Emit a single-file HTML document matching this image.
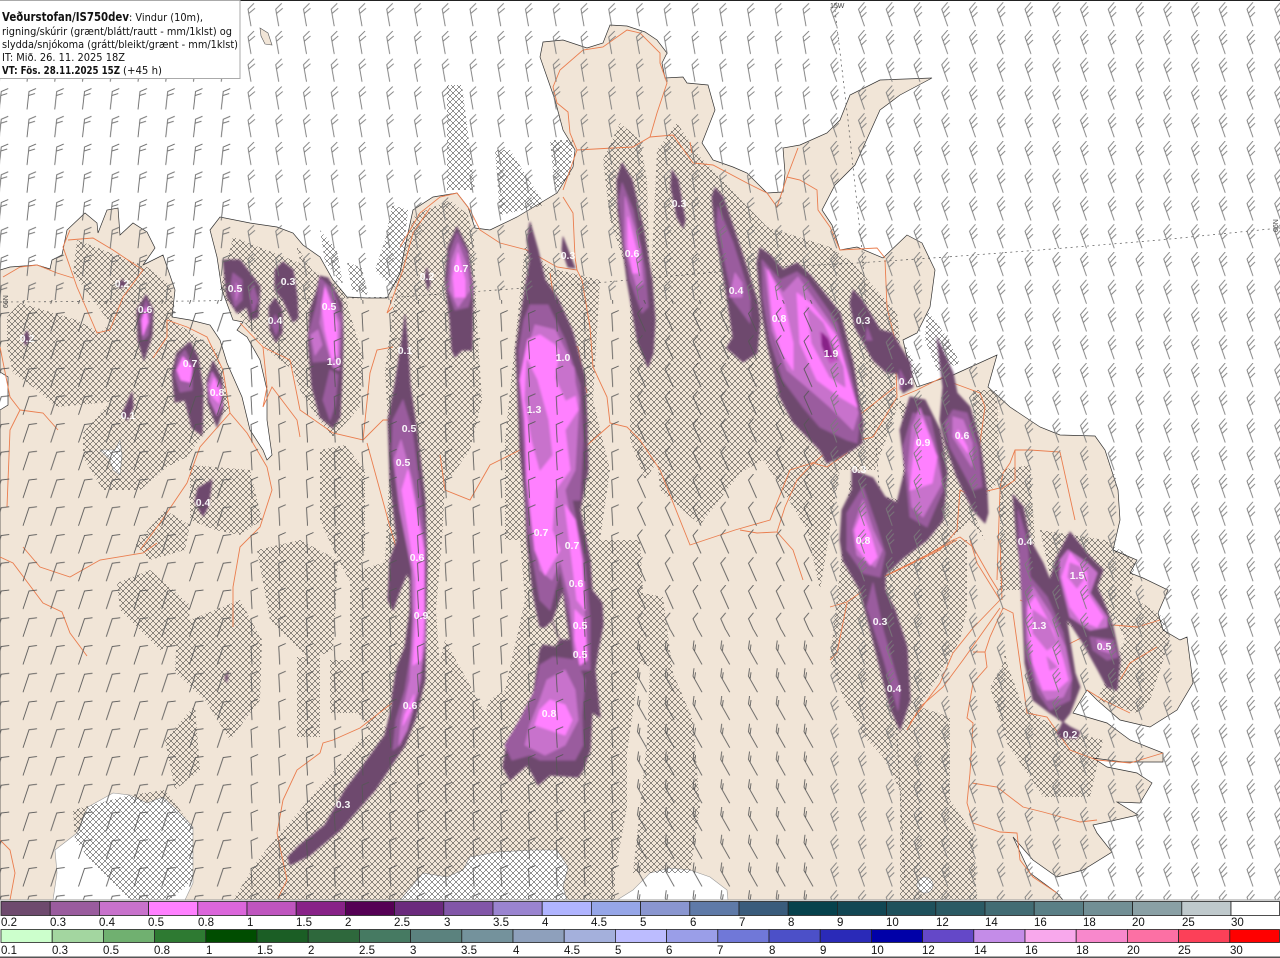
<!DOCTYPE html>
<html><head><meta charset="utf-8"><title>Veðurstofan</title>
<style>
html,body{margin:0;padding:0;background:#fff}
svg{display:block}
.a{fill:#6e4a6e;stroke:#6e4a6e}.b{fill:#9a5c9e;stroke:#9a5c9e}.c{fill:#c872cc;stroke:#c872cc}.d{fill:#ff80ff;stroke:#ff80ff}.e{fill:#db66db;stroke:#db66db}.f{fill:#bf55bf;stroke:#bf55bf}.g{fill:#882288;stroke:#882288}
.p polygon{stroke-width:1;stroke-linejoin:round}
.r polyline{fill:none;stroke:#ea7d4e;stroke-width:.9}
.l text{font:bold 10.5px "Liberation Sans",sans-serif;fill:#fff;text-anchor:middle;opacity:.95}
.k text{font:11.5px "Liberation Sans",sans-serif;fill:#111}
.k rect{stroke:#222;stroke-width:.8}
.t text{font-family:"DejaVu Sans",sans-serif;font-size:10.5px;fill:#111}
</style></head><body>
<svg width="1280" height="958" viewBox="0 0 1280 958" xmlns="http://www.w3.org/2000/svg">
<defs>
<filter id="s" filterUnits="userSpaceOnUse" x="0" y="0" width="1280" height="958"><feGaussianBlur stdDeviation="1"/></filter>
<pattern id="h" width="6" height="6" patternUnits="userSpaceOnUse"><path d="M0 0L6 6M6 0L0 6" stroke="#222" stroke-width=".5" fill="none"/></pattern>
<pattern id="p0" x="20" y="30" width="27.75" height="27.75" patternUnits="userSpaceOnUse"><path d="M7 24L9 6L16 3M8.7 10L15 8" stroke="#666" stroke-width=".9" fill="none"/></pattern>
<pattern id="p1" x="17" y="30" width="27.75" height="27.75" patternUnits="userSpaceOnUse"><path d="M12 24L9 7L15 1M10 11L16 6" stroke="#777" stroke-width=".9" fill="none"/></pattern>
<pattern id="p7" x="18" y="30" width="27.75" height="27.75" patternUnits="userSpaceOnUse"><path d="M14 24L8 7L14 0M9.5 11L15.5 4M10.8 15L16 10" stroke="#7a7a7a" stroke-width=".9" fill="none"/></pattern>
<pattern id="p4" x="20" y="30" width="27.75" height="27.75" patternUnits="userSpaceOnUse"><path d="M3 24L9 6L17 5" stroke="#555" stroke-width=".85" fill="none"/></pattern>
<pattern id="p5" x="20" y="30" width="27.75" height="27.75" patternUnits="userSpaceOnUse"><path d="M10 24L9 6L16 3" stroke="#555" stroke-width=".85" fill="none"/></pattern>
<pattern id="p6" x="20" y="30" width="27.75" height="27.75" patternUnits="userSpaceOnUse"><path d="M15 24L7 6L12 0" stroke="#555" stroke-width=".85" fill="none"/></pattern>
<pattern id="p8" x="20" y="30" width="27.75" height="27.75" patternUnits="userSpaceOnUse"><path d="M16 24L7 8L8 0M8.5 11L9.5 4" stroke="#555" stroke-width=".85" fill="none"/></pattern>
</defs>
<rect width="1280" height="958" fill="#fff"/>
<!-- land -->
<path fill="#f1e5d7" stroke="#333" stroke-width=".7" d="M0 270L10 267L37 265L50 269L52 260L62 255L67 230L85 213L97 223L98 233L107 210L118 208L120 235L133 223L147 232L155 248L143 265L163 255L175 290L172 317L190 320L210 325L220 340L227 363L242 397L250 430L263 450L267 460L272 455L267 420L267 390L260 360L247 337L237 330L243 322L233 320L222 290L217 257L210 230L220 217L250 223L277 227L293 233L303 245L320 257L333 280L347 297L367 298L387 298L400 273L405 247L413 210L433 197L457 193L468 207L475 228L490 230L517 217L557 193L573 167L575 150L563 130L555 100L540 57L543 42L563 40L587 48L603 43L610 25L627 26L645 32L657 40L667 53L662 63L665 78L683 77L687 83L708 85L715 110L702 143L713 160L733 167L747 173L767 193L783 192L785 173L783 148L800 145L827 133L840 120L850 95L880 80L932 78L900 95L880 110L862 150L855 165L835 185L822 210L832 225L840 250L857 247L883 258L907 235L922 243L935 270L930 307L917 333L903 340L910 370L917 387L953 375L997 355L988 387L1010 407L1040 427L1060 435L1095 436L1105 450L1118 490L1120 520L1113 550L1137 560L1130 573L1143 578L1168 590L1158 613L1163 630L1180 640L1187 637L1193 683L1177 710L1150 727L1120 720L1097 700L1087 690L1073 713L1107 723L1130 740L1163 753L1163 762L1123 762L1093 758L1107 767L1137 773L1152 783L1140 803L1117 802L1138 815L1107 822L1093 825L1097 833L1112 852L1083 870L1057 877L1033 860L1013 837L1030 873L1057 893L1063 900L0 900L0 410L8 405L8 377L0 372Z"/>
<path fill="#f1e5d7" stroke="#555" stroke-width=".6" d="M260 28L268 33L272 45L265 44L261 36Z"/>
<!-- glaciers -->
<g fill="#fff" stroke="#999" stroke-width=".6">
<path d="M113 793L130 795L147 803L163 797L177 810L193 827L193 860L193 883L185 900L53 900L57 873L55 850L77 833L88 807Z"/>
<path d="M400 900L423 873L447 877L463 870L470 857L497 852L533 850L557 850L568 867L563 887L567 900Z"/>
<path d="M617 900L633 890L650 873L670 868L690 870L710 877L727 890L728 900Z"/>
<path d="M100 450L115 450L120 440L122 455L120 475L113 470L110 460Z"/>
<circle cx="925" cy="885" r="8"/>
</g>
<!-- hatching -->
<path fill="url(#h)" d="M77 240L147 267L170 285L175 310L172 320L217 350L223 377L230 407L207 430L187 457L167 467L140 490L103 490L83 457L83 433L110 402L57 407L33 387L13 373L7 347L7 317L20 303L77 320L100 333L110 323L73 273Z
M190 465L250 470L262 520L240 535L215 530L190 520Z M135 545L165 510L190 525L185 550L150 560Z
M233 237L300 263L343 290L363 357L360 407L333 437L317 417L300 390L293 370L267 350L240 317L220 290Z
M320 230L337 250L343 285L325 262Z M347 262L362 268L368 295L352 290Z M392 205L408 210L403 260L395 290L375 270L385 240Z
M447 85L462 85L475 190L447 190Z M495 150L510 150L545 205L500 215Z M550 140L573 140L570 175L555 192Z M296 245L325 290L300 260Z
M400 255L415 215L450 200L468 215L474 240L475 280L478 340L482 400L470 450L445 485L442 540L436 610L440 670L445 720L420 740L400 700L388 650L385 560L390 460L385 370L393 310Z
M320 450L345 445L365 470L365 550L355 590L338 560L320 520Z
M117 583L150 570L190 605L188 640L160 650L120 610Z M177 625L240 600L262 640L260 700L230 740L205 700L175 672Z
M257 550L300 540L338 560L333 650L310 660L290 640L270 620Z M297 657L320 657L320 737L297 737Z M330 660L360 660L360 713L330 713Z M350 573L392 560L395 700L375 740L350 700Z
M73 810L130 795L165 790L193 827L193 880L170 900L130 900L90 860L75 840Z
M165 740L195 705L200 770L175 790Z
M233 900L260 857L360 740L390 723L430 700L445 640L500 740L470 750L490 700L505 690L525 600L520 540L505 540L505 440L525 245L550 268L600 280L593 400L610 470L600 540L640 540L643 593L663 597L673 673L693 720L700 807L690 873L633 873L647 740L650 667L640 663L627 753L627 807L615 873L615 900Z
M603 160L620 123L640 140L647 180L650 280L630 280L610 220Z
M630 290L660 340L665 450L645 480L630 440Z
M657 150L677 123L700 157L767 227L830 247L853 263L897 313L900 340L895 385L903 425L903 500L883 497L860 490L850 480L830 660L843 697L867 740L883 757L900 790L900 900L977 900L973 833L950 800L950 717L920 707L960 640L967 610L967 540L950 540L970 520L985 540L960 480L940 430L900 400L875 470L840 470L820 590L807 530L783 490L763 460L740 473L700 525L660 490L652 400L650 300Z
M905 345L920 375L908 373Z M927 310L947 337L960 363L938 372L925 340Z M973 390L997 390L1000 480L985 497L973 450Z
M990 687L1007 657L1003 653L1023 707L1060 730L1103 740L1090 797L1043 797L1007 743Z M1097 573L1163 617L1170 640L1150 700L1137 713L1097 700L1125 640Z
M1000 470L1030 465L1035 540L1025 590L1000 590Z M1040 530L1105 540L1135 560L1130 600L1095 640L1060 620Z"/>
<!-- graticule -->
<g fill="none" stroke="#555" stroke-width=".7" stroke-dasharray="2 3.5">
<polyline points="0,302 200,301 400,297 607,282 760,268 857,263 947,257 1040,250 1160,240 1280,228"/>
<polyline points="835,10 848,120 862,250 880,500 895,700 905,880"/>
</g>
<!-- roads -->
<g class="r">
<polyline points="3,277 20,267 37,265 57,273 73,278"/>
<polyline points="70,230 63,247 77,287 97,333 110,330 123,297 143,270 113,250 93,238 68,240"/>
<polyline points="0,347 10,397 20,410 10,430 7,507"/>
<polyline points="20,410 43,413 58,430"/>
<polyline points="153,358 167,337 167,320 187,327 207,337 223,370 230,413 200,447 187,483 160,523 140,550"/>
<polyline points="230,413 247,433 267,467 272,490 260,527 240,547 233,587 233,627"/>
<polyline points="240,323 263,347 290,360 300,410 333,433 363,440 370,373 377,350 393,347"/>
<polyline points="263,347 267,387 263,407 272,387 297,420 300,437"/>
<polyline points="363,440 383,420 393,420"/>
<polyline points="393,307 387,313 403,270 413,233 430,208"/>
<polyline points="367,443 390,527 397,550"/>
<polyline points="0,557 13,563 43,603 62,612 70,633 87,656"/>
<polyline points="23,547 40,567 70,577 100,560 143,553 157,543"/>
<polyline points="392,703 360,728 333,740 323,743 320,753 297,770 283,800 277,833 287,880 278,898"/>
<polyline points="0,840 10,850 15,873 10,900"/>
<polyline points="400,247 420,213 440,197 457,193 470,210 480,230 500,243 527,250 557,267 577,270 582,280 590,327 593,367 607,397 610,423 627,427 640,440 660,470 690,545 735,530 770,520 790,470 815,462 840,440 855,430"/>
<polyline points="550,273 555,307 552,330 560,343 578,347 582,373 587,393"/>
<polyline points="563,197 573,213 575,257 577,270"/>
<polyline points="577,150 613,148 633,147 650,137 673,135 693,163 713,165 747,183 767,193 777,207 787,177 798,148"/>
<polyline points="577,150 570,133 568,112 557,103 553,87 560,70 583,50 603,47 627,30 640,33 660,53 660,63 667,83 657,113 650,137"/>
<polyline points="577,150 563,190"/>
<polyline points="690,142 692,153"/>
<polyline points="440,455 445,490 470,500 490,465 520,450 585,447 610,425"/>
<polyline points="740,530 757,533 777,532 785,507 797,480 813,463 827,467 847,453 847,440 860,440 873,437 897,397 895,340 887,307 885,260"/>
<polyline points="830,430 853,420 895,387"/>
<polyline points="777,532 793,550 803,580"/>
<polyline points="865,588 883,577 913,563 953,540 960,537 973,547 990,577 998,590"/>
<polyline points="883,577 940,550 957,530 960,490 970,495 1000,488 1003,473 1010,463 1015,450 1030,450 1060,452 1075,520"/>
<polyline points="1015,450 1015,480 1000,490 997,580"/>
<polyline points="953,383 980,393 985,407 980,443 970,487"/>
<polyline points="947,375 917,390 900,397"/>
<polyline points="787,177 800,180 817,190 818,210 830,227 840,250 877,248 885,258"/>
<polyline points="830,607 847,602 883,577 957,540"/>
<polyline points="830,660 837,653 847,603"/>
<polyline points="907,730 920,707 943,687 963,660 1000,608"/>
<polyline points="910,723 940,683 953,653 973,628 1000,600 977,563 970,540"/>
<polyline points="1000,540 1002,600"/>
<polyline points="1003,608 990,637 985,652 973,652"/>
<polyline points="985,652 987,667 973,683 967,718 973,723 970,773 967,803 973,823 1000,832 1017,833 1020,860 1033,877 1057,893"/>
<polyline points="972,783 997,787 1023,807 1043,812 1080,822 1097,820"/>
<polyline points="1003,608 1013,613 1027,713 1047,717 1063,740 1070,750 1097,760 1130,763 1163,753"/>
<polyline points="1020,600 1050,613 1077,610 1083,600"/>
<polyline points="1033,653 1063,647 1087,635 1113,625 1137,627 1160,620"/>
<polyline points="1120,680 1130,663 1157,647"/>
<polyline points="1087,690 1103,700 1130,713"/>
</g>
<!-- precipitation -->
<g class="p" filter="url(#s)">
<polygon class="a" points="146,295 153,310 152,335 144,360 138,340 137,310"/>
<polygon class="b" points="146,300 151,315 148,335 143,340 140,320"/>
<polygon class="d" points="146,308 148,322 143,335 142,320"/>
<polygon class="a" points="190,342 198,357 203,390 202,435 192,428 185,400 175,402 172,373 177,353"/>
<polygon class="b" points="185,350 192,365 192,390 180,392 175,375 178,358"/>
<polygon class="d" points="183,357 192,368 190,382 181,380 177,370"/>
<polygon class="a" points="213,361 222,380 223,410 217,427 208,403 207,380"/>
<polygon class="c" points="212,372 220,385 222,405 217,415 210,400 208,385"/>
<polygon class="d" points="214,378 220,392 219,403 214,398 210,390"/>
<polygon class="a" points="223,260 240,260 250,273 260,287 258,317 250,320 247,307 237,313 227,297"/>
<polygon class="b" points="233,273 242,280 242,300 235,307 230,290"/>
<polygon class="c" points="236,283 239,290 236,300"/>
<polygon class="b" points="253,285 258,300 253,312 250,295"/>
<polygon class="a" points="283,262 293,270 297,297 298,318 293,322 283,300 275,290 275,270"/>
<polygon class="a" points="275,298 282,310 282,333 276,342 270,330 269,307"/>
<polygon class="b" points="275,315 280,325 276,335 272,325"/>
<polygon class="a" points="320,276 328,278 342,303 343,337 342,377 340,417 333,428 320,417 312,387 308,340 310,310 317,290"/>
<polygon class="b" points="320,278 333,290 342,317 340,360 313,362 309,333 317,303"/>
<polygon class="c" points="325,285 340,323 339,370 333,367 320,323"/>
<polygon class="d" points="325,288 337,323 337,355 332,360 325,330 322,305"/>
<polygon class="c" points="318,330 322,345 315,355 311,335"/>
<polygon class="b" points="330,370 338,375 335,405 330,420 323,400"/>
<polygon class="a" points="405,315 408,350 410,385 418,440 425,500 427,560 426,620 425,680 415,720 405,745 395,760 375,790 340,830 310,855 290,865 288,857 300,845 325,825 345,790 360,770 385,735 392,705 392,697 397,667 405,647 410,610 410,580 407,573 400,590 393,610 388,600 390,560 397,540 390,480 388,420 395,385 402,340"/>
<polygon class="b" points="403,400 412,430 420,490 425,540 424,610 421,680 410,720 400,745 393,750 396,720 405,690 413,640 414,600 412,560 400,510 392,450 393,420"/>
<polygon class="c" points="401,440 412,480 423,540 425,640 418,690 407,730 399,745 401,720 410,680 413,620 412,570 400,510 394,460"/>
<polygon class="d" points="408,470 418,520 424,550 424,620 421,660 413,665 416,620 416,580 410,540 402,490"/>
<polygon class="d" points="405,715 414,695 411,710 403,725"/>
<polygon class="a" points="212,480 208,507 203,516 195,502 198,488"/>
<polygon class="a" points="132,392 133,407 128,420 122,415 125,408"/>
<polygon class="a" points="122,280 127,284 121,288 118,284"/>
<polygon class="a" points="27,331 30,340 25,345 24,336"/>
<polygon class="a" points="563,237 575,268 568,267 562,250"/>
<polygon class="a" points="427,268 430,283 428,290 425,277"/>
<polygon class="a" points="228,672 227,682 225,678"/>
<polygon class="a" points="457,227 468,250 473,287 472,350 462,350 455,357 452,350 450,320 445,280 448,247"/>
<polygon class="b" points="457,233 467,253 473,290 468,307 455,310 447,287 450,253"/>
<polygon class="c" points="458,243 467,267 470,290 458,307 450,290 452,260"/>
<polygon class="d" points="458,253 465,280 465,297 455,297 453,277"/>
<path class="a" fill-rule="evenodd" stroke-width="1" d="M530 222L538 250L545 280L557 297L572 330L585 377L587 420L588 470L580 510L590 560L592 590L602 603L603 625L598 650L595 670L600 717L592 712L590 750L583 770L578 777L550 775L538 785L532 773L527 765L510 780L503 767L507 743L533 697L540 650L543 645L556 647L560 640L552 620L545 627L540 627L533 593L527 540L525 500L520 450L518 400L516 350L520 320L525 290L530 260L527 240Z M563 590L570 640L560 640L555 628L552 620Z"/>
<polygon class="b" points="530,305 548,305 565,340 580,385 583,440 580,500 572,500 585,565 590,620 590,670 575,670 570,620 560,570 550,610 540,600 528,530 525,470 520,400 519,350 524,320"/>
<polygon class="c" points="535,325 555,330 570,360 579,400 575,470 565,490 578,560 585,620 585,655 575,655 570,600 560,560 552,580 540,570 530,500 525,430 522,370"/>
<polygon class="d" points="528,340 540,335 555,345 570,370 578,410 565,430 570,470 555,490 552,530 560,550 545,575 535,550 527,480 525,420 520,380"/>
<polygon class="d" points="565,505 575,520 582,560 585,610 577,600 572,560"/>
<polygon class="d" points="575,610 585,620 587,660 580,665 575,640"/>
<polygon class="c" points="527,360 537,380 548,420 552,455 540,470 532,440 525,400"/>
<polygon class="c" points="560,350 574,368 576,395 566,400 556,378"/>
<polygon class="b" points="553,657 575,660 585,680 582,715 583,745 575,760 540,760 530,755 512,760 505,745 520,720 535,690 540,665"/>
<polygon class="c" points="565,670 575,690 578,720 565,745 545,755 525,745 530,725 540,700 547,680"/>
<polygon class="d" points="550,700 565,705 572,720 565,735 550,730 535,725 540,710"/>
<polygon class="a" points="622,163 632,180 643,227 652,280 655,320 653,353 648,367 638,343 627,280 618,210 617,180"/>
<polygon class="b" points="622,183 633,210 645,270 648,307 642,313 630,280 623,237 619,200"/>
<polygon class="c" points="625,197 640,247 643,283 637,287 625,247"/>
<polygon class="d" points="628,217 637,253 639,273 633,273 628,247"/>
<polygon class="a" points="672,170 678,180 685,220 683,228 677,217 671,187"/>
<polygon class="a" points="715,188 723,197 740,247 757,300 760,320 757,353 743,362 727,348 733,337 728,303 715,227 712,197"/>
<polygon class="b" points="718,207 733,243 750,297 750,323 733,300 723,253 717,225"/>
<polygon class="c" points="735,273 742,283 742,297 730,297"/>
<polygon class="a" points="760,248 770,255 783,270 797,263 810,275 840,313 853,363 863,423 862,443 855,448 840,457 827,463 820,450 793,422 780,397 768,347 762,313 757,263"/>
<polygon class="b" points="762,260 780,280 797,272 807,280 837,323 850,370 860,417 857,443 847,440 820,427 803,407 783,380 770,340 763,297"/>
<polygon class="c" points="765,267 783,293 798,277 835,330 847,370 858,413 853,430 830,407 807,387 787,370 772,330"/>
<polygon class="d" points="768,270 783,300 793,343 793,370 782,353 773,323"/>
<polygon class="d" points="797,293 810,303 837,337 847,373 857,407 840,397 817,380 800,343"/>
<polygon class="c" points="807,307 823,323 843,367 845,387 830,377 812,343"/>
<polygon class="f" points="820,332 828,337 838,360 830,363 822,347"/>
<polygon class="g" points="822,333 828,340 833,358 826,355 822,345"/>
<polygon class="a" points="853,290 862,300 880,330 892,333 910,363 913,387 903,393 897,373 887,373 873,360 855,327 850,303"/>
<polygon class="b" points="867,327 872,340 866,340"/>
<polygon class="b" points="900,370 905,380 900,390"/>
<polygon class="a" points="852,470 873,478 885,497 897,503 905,470 900,430 910,397 925,400 940,430 947,473 943,520 927,540 903,558 885,575 885,590 895,610 907,647 910,700 900,730 890,707 873,640 860,590 843,560 840,540 842,510 852,490"/>
<polygon class="b" points="913,413 930,417 940,463 943,490 927,527 910,517 908,497 903,447"/>
<polygon class="c" points="920,408 933,443 942,483 923,517 912,507 908,470 912,427"/>
<polygon class="d" points="922,418 937,457 932,483 920,487 910,490 915,443"/>
<polygon class="b" points="863,487 877,527 885,553 880,577 863,573 847,550 847,513"/>
<polygon class="c" points="863,500 873,530 882,550 875,567 857,555 853,530"/>
<polygon class="d" points="862,513 870,533 877,557 870,565 857,547 855,530"/>
<polygon class="b" points="873,583 883,630 900,690 898,710 883,657 867,607"/>
<polygon class="a" points="937,338 953,373 957,393 970,407 980,443 987,493 988,513 985,523 973,510 957,477 945,443 940,420 943,387"/>
<polygon class="b" points="953,410 967,413 978,447 982,487 973,490 950,447 945,423"/>
<polygon class="c" points="953,417 963,420 972,443 972,467 953,437"/>
<polygon class="d" points="958,430 967,447 968,453 957,438"/>
<polygon class="a" points="1013,495 1023,507 1030,540 1043,563 1050,580 1067,623 1075,673 1080,687 1070,713 1063,722 1050,713 1033,700 1025,663 1022,600 1020,560 1017,540"/>
<polygon class="b" points="1018,510 1027,540 1030,577 1047,597 1063,633 1072,677 1070,700 1050,710 1038,693 1027,657 1023,607 1020,560"/>
<polygon class="c" points="1033,587 1050,613 1065,647 1071,680 1063,697 1047,700 1037,683 1027,640 1027,603"/>
<polygon class="d" points="1035,597 1053,630 1063,660 1068,680 1057,690 1043,690 1033,663 1028,627 1028,607"/>
<polygon class="c" points="1033,610 1047,620 1057,643 1047,650 1033,633"/>
<polygon class="c" points="1047,657 1057,667 1050,670"/>
<polygon class="a" points="1070,532 1090,557 1103,570 1097,587 1107,610 1113,627 1120,660 1117,690 1107,687 1098,670 1083,643 1070,623 1060,615 1050,580 1057,557"/>
<polygon class="c" points="1068,550 1087,563 1097,573 1090,593 1107,617 1107,627 1090,630 1070,617 1060,577 1060,560"/>
<polygon class="d" points="1070,553 1087,573 1087,593 1103,617 1097,627 1080,620 1070,607 1062,577"/>
<polygon class="c" points="1070,563 1080,567 1083,580 1077,588 1068,577"/>
<polygon class="b" points="1090,637 1113,640 1118,657 1107,660 1093,650"/>
<polygon class="c" points="1097,640 1110,643 1110,653 1100,650"/>
<polygon class="a" points="1060,728 1063,722 1070,727 1080,732 1077,738 1060,738 1057,733"/>
</g>
<!-- wind barbs -->
<g>
<rect x="0" y="0" width="240" height="300" fill="url(#p0)"/>
<rect x="240" y="0" width="590" height="300" fill="url(#p1)"/>
<rect x="830" y="0" width="450" height="900" fill="url(#p7)"/>
<rect x="0" y="300" width="240" height="600" fill="url(#p4)"/>
<rect x="240" y="300" width="380" height="600" fill="url(#p5)"/>
<rect x="620" y="300" width="210" height="330" fill="url(#p6)"/>
<rect x="620" y="630" width="210" height="270" fill="url(#p8)"/>
</g>
<!-- value labels -->
<g class="l">
<text x="145" y="313">0.6</text><text x="190" y="367">0.7</text><text x="217" y="396">0.8</text><text x="235" y="292">0.5</text><text x="288" y="285">0.3</text><text x="275" y="324">0.4</text><text x="329" y="310">0.5</text><text x="334" y="365">1.0</text><text x="461" y="272">0.7</text><text x="405" y="354">0.1</text><text x="409" y="432">0.5</text><text x="403" y="466">0.5</text><text x="417" y="561">0.6</text><text x="421" y="619">0.9</text><text x="410" y="709">0.6</text><text x="343" y="808">0.3</text><text x="203" y="506">0.4</text><text x="128" y="419">0.1</text><text x="563" y="361">1.0</text><text x="534" y="413">1.3</text><text x="541" y="536">0.7</text><text x="572" y="549">0.7</text><text x="576" y="587">0.6</text><text x="580" y="629">0.5</text><text x="580" y="658">0.5</text><text x="549" y="717">0.8</text><text x="632" y="257">0.6</text><text x="679" y="207">0.3</text><text x="736" y="294">0.4</text><text x="779" y="322">0.8</text><text x="831" y="357">1.9</text><text x="863" y="324">0.3</text><text x="906" y="385">0.4</text><text x="923" y="446">0.9</text><text x="962" y="439">0.6</text><text x="859" y="473">0.3</text><text x="863" y="544">0.8</text><text x="880" y="625">0.3</text><text x="894" y="692">0.4</text><text x="1025" y="545">0.4</text><text x="1039" y="629">1.3</text><text x="1077" y="579">1.5</text><text x="1104" y="650">0.5</text><text x="1070" y="738">0.2</text><text x="568" y="259">0.3</text><text x="427" y="280">0.2</text><text x="122" y="287">0.2</text><text x="27" y="342">0.2</text>
</g>
<!-- graticule labels -->
<g font-family="'Liberation Sans',sans-serif" font-size="7" fill="#444">
<text x="830" y="8">15W</text>
<text transform="translate(8,308) rotate(-90)">66N</text>
<text transform="translate(1278,232) rotate(-90)">66N</text>
</g>
<!-- map bottom line / top -->
<rect x="0" y="899.5" width="1280" height="1" fill="#999"/>
<rect x="0" y="900.5" width="1280" height="57.5" fill="#fff"/>
<rect x="0" y="0" width="1280" height="1" fill="#222"/>
<!-- title box -->
<rect x="-1" y="0.5" width="241" height="78" fill="#fff" stroke="#aaa"/>
<g class="t">
<text x="2" y="21" style="font-weight:bold;font-size:12px" textLength="127" lengthAdjust="spacingAndGlyphs">Veðurstofan/IS750dev</text>
<text x="129" y="21" textLength="74" lengthAdjust="spacingAndGlyphs">: Vindur (10m),</text>
<text x="2" y="35" textLength="230" lengthAdjust="spacingAndGlyphs">rigning/skúrir (grænt/blátt/rautt - mm/1klst) og</text>
<text x="2" y="48" textLength="236" lengthAdjust="spacingAndGlyphs">slydda/snjókoma (grátt/bleikt/grænt - mm/1klst)</text>
<text x="2" y="61" textLength="123" lengthAdjust="spacingAndGlyphs">IT: Mið. 26. 11. 2025 18Z</text>
<text x="2" y="74" style="font-weight:bold" textLength="118" lengthAdjust="spacingAndGlyphs">VT: Fös. 28.11.2025 15Z</text>
<text x="123" y="74" textLength="39" lengthAdjust="spacingAndGlyphs">(+45 h)</text>
</g>
<!-- colour bars -->
<g class="k">
<rect x="1" y="901.5" width="49.2" height="14" fill="#6e4a6e"/><rect x="50.2" y="901.5" width="49.2" height="14" fill="#9a5c9e"/><rect x="99.4" y="901.5" width="49.2" height="14" fill="#c872cc"/><rect x="148.6" y="901.5" width="49.2" height="14" fill="#ff80ff"/><rect x="197.8" y="901.5" width="49.2" height="14" fill="#db66db"/><rect x="247" y="901.5" width="49.2" height="14" fill="#bf55bf"/><rect x="296.2" y="901.5" width="49.2" height="14" fill="#882288"/><rect x="345.4" y="901.5" width="49.2" height="14" fill="#550055"/><rect x="394.6" y="901.5" width="49.2" height="14" fill="#6b2a7d"/><rect x="443.8" y="901.5" width="49.2" height="14" fill="#8256a8"/><rect x="493" y="901.5" width="49.2" height="14" fill="#9a84d0"/><rect x="542.2" y="901.5" width="49.2" height="14" fill="#b0b4ff"/><rect x="591.4" y="901.5" width="49.2" height="14" fill="#96a6e8"/><rect x="640.6" y="901.5" width="49.2" height="14" fill="#8a96d0"/><rect x="689.8" y="901.5" width="49.2" height="14" fill="#5f7aa8"/><rect x="739" y="901.5" width="49.2" height="14" fill="#3a5c7c"/><rect x="788.2" y="901.5" width="49.2" height="14" fill="#07424d"/><rect x="837.4" y="901.5" width="49.2" height="14" fill="#124754"/><rect x="886.6" y="901.5" width="49.2" height="14" fill="#1f515c"/><rect x="935.8" y="901.5" width="49.2" height="14" fill="#2b5a64"/><rect x="985" y="901.5" width="49.2" height="14" fill="#426c74"/><rect x="1034.2" y="901.5" width="49.2" height="14" fill="#5a7f86"/><rect x="1083.4" y="901.5" width="49.2" height="14" fill="#728f95"/><rect x="1132.6" y="901.5" width="49.2" height="14" fill="#8aa0a5"/><rect x="1181.8" y="901.5" width="49.2" height="14" fill="#bfc9cc"/><rect x="1231" y="901.5" width="48.5" height="14" fill="#fff"/>
<text x="1" y="926">0.2</text><text x="50" y="926">0.3</text><text x="99" y="926">0.4</text><text x="148" y="926">0.5</text><text x="198" y="926">0.8</text><text x="247" y="926">1</text><text x="296" y="926">1.5</text><text x="345" y="926">2</text><text x="394" y="926">2.5</text><text x="444" y="926">3</text><text x="493" y="926">3.5</text><text x="542" y="926">4</text><text x="591" y="926">4.5</text><text x="640" y="926">5</text><text x="690" y="926">6</text><text x="739" y="926">7</text><text x="788" y="926">8</text><text x="837" y="926">9</text><text x="886" y="926">10</text><text x="936" y="926">12</text><text x="985" y="926">14</text><text x="1034" y="926">16</text><text x="1083" y="926">18</text><text x="1132" y="926">20</text><text x="1182" y="926">25</text><text x="1231" y="926">30</text>
<rect x="1" y="929.5" width="51.2" height="13" fill="#ccffcc"/><rect x="52.2" y="929.5" width="51.2" height="13" fill="#a3d6a0"/><rect x="103.4" y="929.5" width="51.2" height="13" fill="#70b070"/><rect x="154.6" y="929.5" width="51.2" height="13" fill="#2e7a32"/><rect x="205.8" y="929.5" width="51.2" height="13" fill="#004d00"/><rect x="257" y="929.5" width="51.2" height="13" fill="#1b5e25"/><rect x="308.2" y="929.5" width="51.2" height="13" fill="#2e683c"/><rect x="359.4" y="929.5" width="51.2" height="13" fill="#467a62"/><rect x="410.6" y="929.5" width="51.2" height="13" fill="#5b827e"/><rect x="461.8" y="929.5" width="51.2" height="13" fill="#74929c"/><rect x="513" y="929.5" width="51.2" height="13" fill="#8ea0bc"/><rect x="564.2" y="929.5" width="51.2" height="13" fill="#a4b0dc"/><rect x="615.4" y="929.5" width="51.2" height="13" fill="#bcbcff"/><rect x="666.6" y="929.5" width="51.2" height="13" fill="#9a9ee8"/><rect x="717.8" y="929.5" width="51.2" height="13" fill="#7078d8"/><rect x="769" y="929.5" width="51.2" height="13" fill="#4c50c8"/><rect x="820.2" y="929.5" width="51.2" height="13" fill="#2a2ab8"/><rect x="871.4" y="929.5" width="51.2" height="13" fill="#0000a8"/><rect x="922.6" y="929.5" width="51.2" height="13" fill="#6448c8"/><rect x="973.8" y="929.5" width="51.2" height="13" fill="#c48ce8"/><rect x="1025" y="929.5" width="51.2" height="13" fill="#f8a8ec"/><rect x="1076.2" y="929.5" width="51.2" height="13" fill="#f888cc"/><rect x="1127.4" y="929.5" width="51.2" height="13" fill="#fc70a4"/><rect x="1178.6" y="929.5" width="51.2" height="13" fill="#fc4058"/><rect x="1229.8" y="929.5" width="49.7" height="13" fill="#ff0000"/>
<text x="1" y="954">0.1</text><text x="52" y="954">0.3</text><text x="103" y="954">0.5</text><text x="154" y="954">0.8</text><text x="206" y="954">1</text><text x="257" y="954">1.5</text><text x="308" y="954">2</text><text x="359" y="954">2.5</text><text x="410" y="954">3</text><text x="461" y="954">3.5</text><text x="513" y="954">4</text><text x="564" y="954">4.5</text><text x="615" y="954">5</text><text x="666" y="954">6</text><text x="717" y="954">7</text><text x="769" y="954">8</text><text x="820" y="954">9</text><text x="871" y="954">10</text><text x="922" y="954">12</text><text x="974" y="954">14</text><text x="1025" y="954">16</text><text x="1076" y="954">18</text><text x="1127" y="954">20</text><text x="1178" y="954">25</text><text x="1230" y="954">30</text>
</g>
<rect x="0" y="956.5" width="1280" height="1.5" fill="#555"/>
</svg>
</body></html>
